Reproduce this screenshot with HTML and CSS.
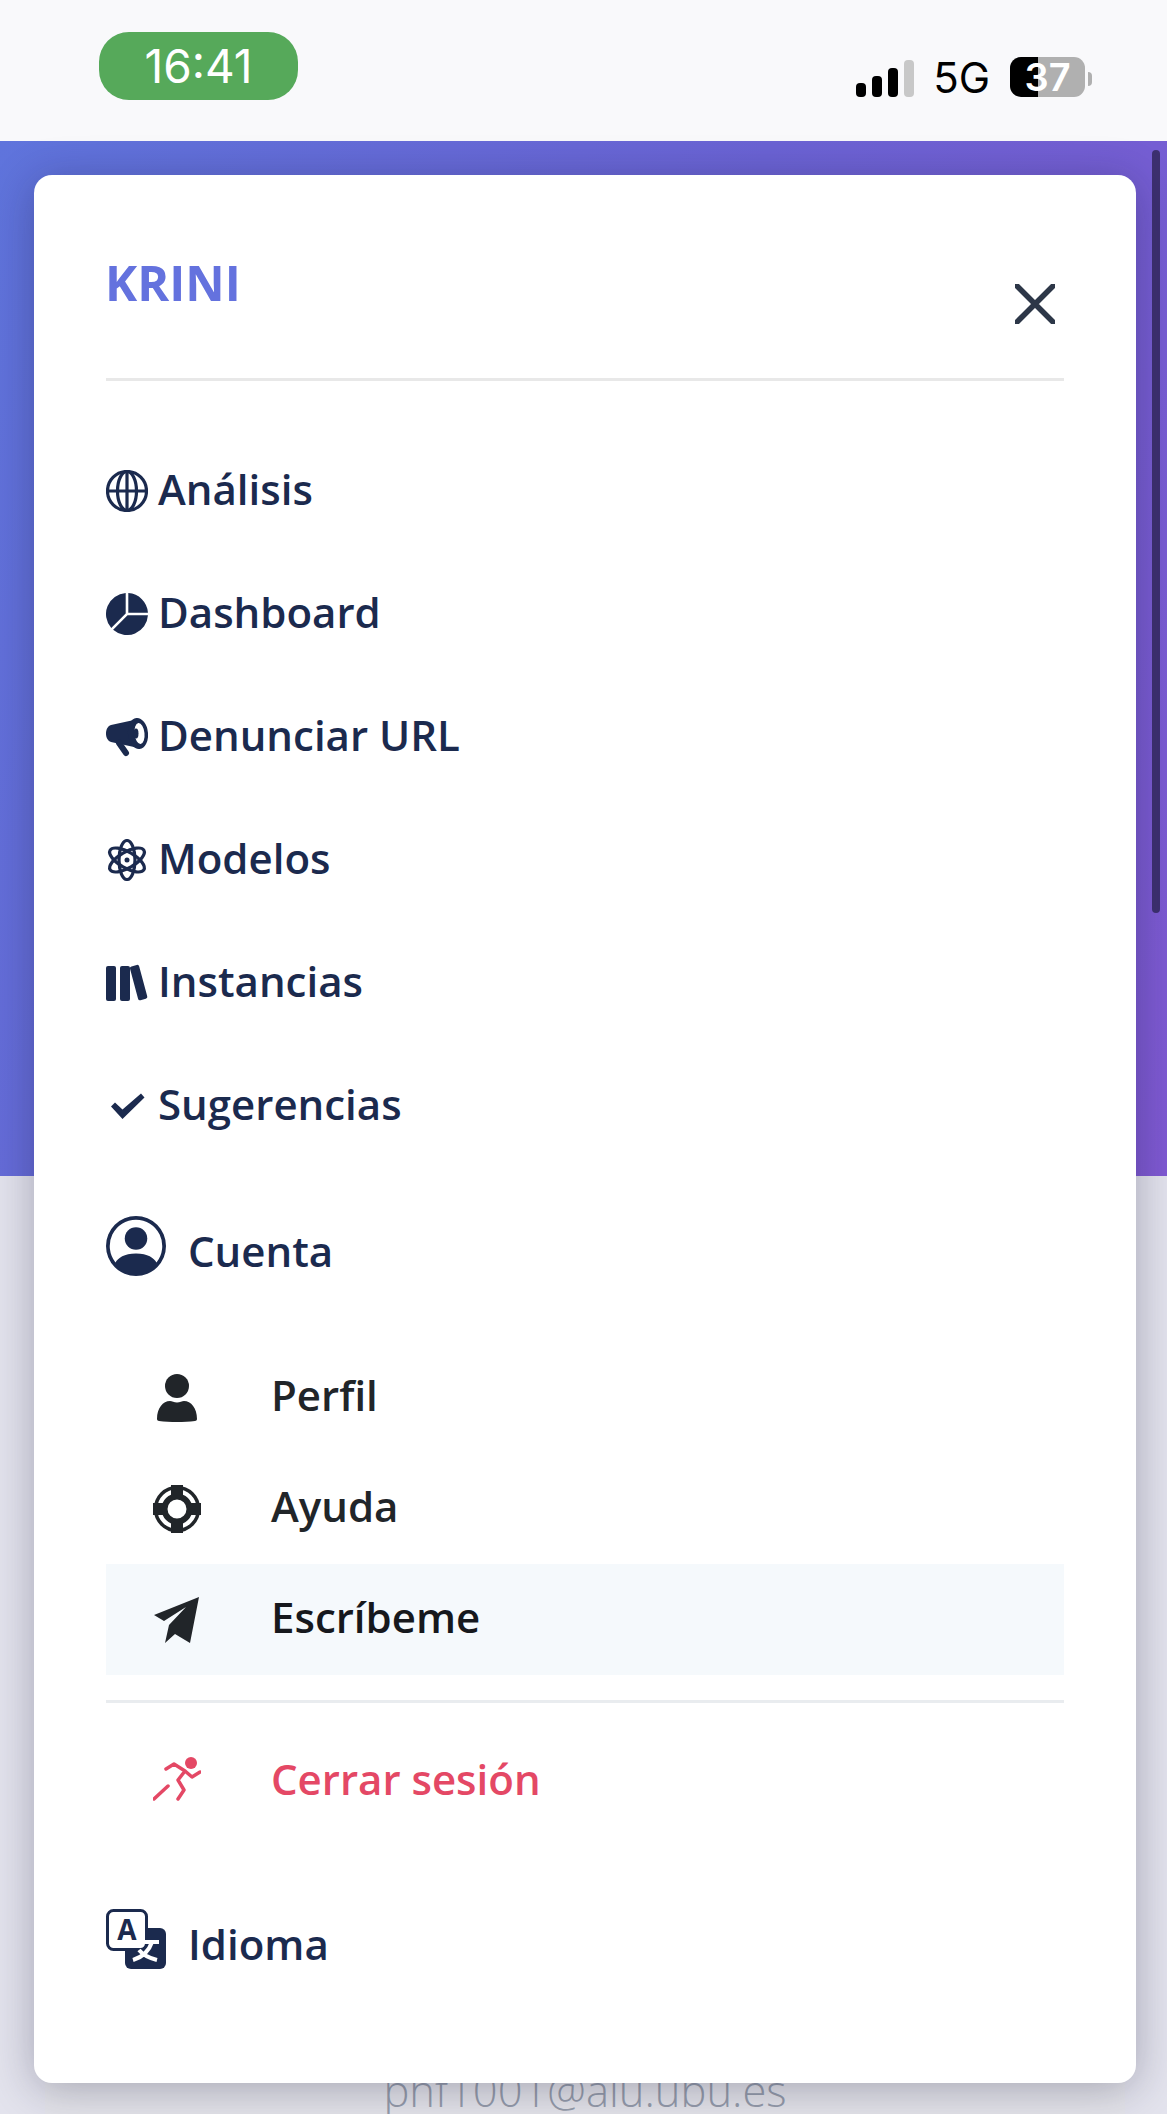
FILE: index.html
```html
<!DOCTYPE html>
<html lang="es">
<head>
    <meta charset="UTF-8">
    <meta name="viewport" content="width=device-width, initial-scale=1.0">
    <title>KRINI</title>
    <link rel="stylesheet" href="styles.css">
</head>
<body>
    <div class="status-bar">
        <div class="clock">16:41</div>
        <div class="status-right">
            <div class="signal">
                <span class="bar bar-1"></span>
                <span class="bar bar-2"></span>
                <span class="bar bar-3"></span>
                <span class="bar bar-4"></span>
            </div>
            <span class="network">5G</span>
            <div class="battery"><span class="battery-text">37</span></div>
            <span class="battery-nub"></span>
        </div>
    </div>

    <div class="hero"></div>

    <div class="profile-panel">
        <div class="profile-mail">phf1001@alu.ubu.es</div>
    </div>

    <div class="scroll-thumb"></div>

    <div class="menu-card">
        <div class="menu-head">
            <div class="brand">KRINI</div>
            <svg class="close-icon" viewBox="0 0 40 40"><path d="M2 2 38 38M38 2 2 38"/></svg>
        </div>

        <div class="nav-list">
            <div class="nav-row">
                <svg class="icon icon-line" viewBox="0 0 42 42">
                    <circle cx="21" cy="21" r="19.500"/>
                    <ellipse cx="21" cy="21" rx="9.500" ry="19.500"/>
                    <path d="M21 1.500v39M1.500 21h39"/>
                </svg>
                <span class="nav-text">Análisis</span>
            </div>
            <div class="nav-row">
                <svg class="icon" viewBox="0 0 16 16"><path d="M15.985 8.500H8.207l-5.500 5.500a8 8 0 0 0 13.277-5.500zM2 13.292A8 8 0 0 1 7.500.015v7.778l-5.500 5.500zM8.500.015V7.500h7.485A8 8 0 0 0 8.500.015z"/></svg>
                <span class="nav-text">Dashboard</span>
            </div>
            <div class="nav-row">
                <svg class="icon" viewBox="0 0 42 42">
                    <path d="M5 9 28 4 28 31 5 26C2 25 0 22 0 17.500 0 13 2 10 5 9z"/>
                    <path class="icon-stem" d="M13 27 20 37"/>
                    <ellipse cx="32" cy="17.500" rx="10" ry="15.500" transform="rotate(-6 32 17.500)"/>
                    <ellipse cx="33.500" cy="17.500" rx="5" ry="10.500" fill="#fff" transform="rotate(-6 33.500 17.500)"/>
                    <ellipse cx="30" cy="17.500" rx="2.500" ry="5"/>
                </svg>
                <span class="nav-text">Denunciar URL</span>
            </div>
            <div class="nav-row">
                <svg class="icon icon-line" viewBox="0 0 42 42">
                    <ellipse cx="21" cy="21" rx="8" ry="19.500"/>
                    <ellipse cx="21" cy="21" rx="8" ry="19.500" transform="rotate(60 21 21)"/>
                    <ellipse cx="21" cy="21" rx="8" ry="19.500" transform="rotate(120 21 21)"/>
                    <circle class="icon-dot" cx="21" cy="21" r="2.500"/>
                </svg>
                <span class="nav-text">Modelos</span>
            </div>
            <div class="nav-row">
                <svg class="icon" viewBox="0 0 42 36"><rect x="0" y="1" width="10" height="35" rx="2"/><rect x="14" y="1" width="10" height="35" rx="2"/><rect x="28" y="0" width="9.500" height="35" rx="2" transform="rotate(-15 33 18)"/></svg>
                <span class="nav-text">Instancias</span>
            </div>
            <div class="nav-row">
                <svg class="icon" viewBox="0 0 42 42"><path d="M5 21.500 9 17.500 16.500 24.500 35 8.500 38.500 12.500 16.500 34z"/></svg>
                <span class="nav-text">Sugerencias</span>
            </div>
        </div>

        <div class="section-row account-row">
            <svg class="section-icon" viewBox="0 0 16 16"><path d="M11 6a3 3 0 1 1-6 0 3 3 0 0 1 6 0z"/><path fill-rule="evenodd" d="M0 8a8 8 0 1 1 16 0A8 8 0 0 1 0 8zm8-7a7 7 0 0 0-5.468 11.370C3.242 11.226 4.805 10 8 10s4.757 1.225 5.468 2.370A7 7 0 0 0 8 1z"/></svg>
            <span class="section-text">Cuenta</span>
        </div>

        <div class="sub-list">
            <div class="sub-row">
                <span class="sub-icon">
                    <svg viewBox="0 0 48 48"><circle cx="24" cy="12" r="12"/><path d="M6 47c-1 0-2-1-2-2 0-11 6-18 13-18 2 0 4 1.500 7 1.500s5-1.500 7-1.500c7 0 13 7 13 18 0 1-1 2-2 2-11 1.300-25 1.300-36 0z"/></svg>
                </span>
                <span class="sub-text">Perfil</span>
            </div>
            <div class="sub-row">
                <span class="sub-icon">
                    <svg viewBox="0 0 48 48">
                        <circle class="ring" cx="24" cy="24" r="21.500"/>
                        <circle class="ring ring-thick" cx="24" cy="24" r="12.500"/>
                        <path d="M18 0h12v14H18zM18 34h12v14H18zM0 18h14v12H0zM34 18h14v12H34z"/>
                    </svg>
                </span>
                <span class="sub-text">Ayuda</span>
            </div>
            <div class="sub-row sub-row-active">
                <span class="sub-icon">
                    <svg viewBox="0 0 48 48"><path d="M46 1 1 19 11 25 33 11 16 29 12 47 22 38 37 47z"/></svg>
                </span>
                <span class="sub-text">Escríbeme</span>
            </div>
        </div>

        <div class="sub-row logout-row">
            <span class="sub-icon">
                <svg class="runner" viewBox="0 0 48 44">
                    <circle class="runner-head" cx="38" cy="6" r="6"/>
                    <path d="M13 12 21 7 32 14 25 23 31 33 25 42M1 42 15 29M32 14 39 20 47 15"/>
                </svg>
            </span>
            <span class="logout-text">Cerrar sesión</span>
        </div>

        <div class="section-row language-row">
            <svg class="section-icon" viewBox="0 0 60 60">
                <rect x="19" y="19" width="41" height="41" rx="6"/>
                <rect class="letter-box" x="1.500" y="1.500" width="39" height="39" rx="6"/>
                <text class="icon-letter" x="21" y="31">A</text>
                <path class="icon-strokes" d="M33 33H53M46 33C43 42 37 48 27 51M33 41C37 46 43 49 51 51"/>
            </svg>
            <span class="section-text">Idioma</span>
        </div>
    </div>
</body>
</html>
```

FILE: styles.css
```css
* {
    box-sizing: border-box;
}

html, body {
    margin: 0;
    height: 2114px;
    overflow: hidden;
}

body {
    position: relative;
    background: #e3e3ed;
    font-family: "Open Sans", "Liberation Sans", sans-serif;
}

/* phone status bar */
.status-bar {
    height: 141px;
    background: #f9f9fb;
    display: flex;
    justify-content: space-between;
    padding: 32px 75px 0 99px;
}

.clock {
    width: 199px;
    height: 68px;
    border-radius: 30px;
    background: #56a95a;
    color: #fff;
    font-family: "Inter", "Liberation Sans", sans-serif;
    font-size: 46px;
    line-height: 68px;
    text-align: center;
}

.status-right {
    display: flex;
    align-items: flex-end;
    height: 65px;
    font-family: "Inter", "Liberation Sans", sans-serif;
}

.signal {
    display: flex;
    align-items: flex-end;
    gap: 6px;
    height: 37px;
    margin-right: 19px;
}

.bar {
    width: 10px;
    background: #000;
    border-radius: 4px;
}

.bar-1 { height: 14px; }
.bar-2 { height: 21px; }
.bar-3 { height: 29px; }
.bar-4 { height: 37px; background: #c8c8c8; }

.network {
    font-size: 42px;
    line-height: 38px;
    color: #000;
    margin-right: 20px;
}

.battery {
    width: 75px;
    height: 40px;
    border-radius: 11px;
    background: linear-gradient(90deg, #000 37%, #b0b0b0 37%);
    text-align: center;
}

.battery-text {
    color: #fff;
    font-size: 38px;
    font-weight: 600;
    line-height: 40px;
}

.battery-nub {
    width: 4px;
    height: 14px;
    margin: 0 0 11px 3px;
    background: #b0b0b0;
    border-radius: 0 7px 7px 0;
}

/* page behind the menu */
.hero {
    height: 1035px;
    background: linear-gradient(110deg, #5f74dc 0%, #6b63d4 50%, #7f59d2 100%);
}

.profile-panel {
    margin: 0 42px 0 45px;
    height: 938px;
    padding-top: 888px;
    background: #e4e4ea;
    text-align: center;
}

.profile-mail {
    font-size: 43.5px;
    font-weight: 300;
    line-height: 54px;
    color: #959cab;
}

.scroll-thumb {
    position: absolute;
    top: 150px;
    left: 1152px;
    width: 8px;
    height: 763px;
    border-radius: 4px;
    background: #3d3070;
}

/* menu overlay */
.menu-card {
    position: absolute;
    top: 175px;
    left: 34px;
    width: 1102px;
    height: 1908px;
    padding: 0 72px;
    background: #fff;
    border-radius: 18px;
    box-shadow: 0 6px 44px rgba(20, 20, 50, 0.3);
}

.menu-head {
    height: 206px;
    display: flex;
    justify-content: space-between;
    border-bottom: 3px solid #e8e8e8;
}

.brand {
    margin: 80px 0 0 -1px;
    font-size: 48.5px;
    font-weight: 700;
    line-height: 54px;
    color: #6472de;
}

.close-icon {
    width: 40px;
    height: 40px;
    margin: 109px 9px 0 0;
    fill: none;
    stroke: #2d3748;
    stroke-width: 5.5;
    stroke-linecap: round;
}

.nav-list {
    margin-top: 48px;
}

.nav-row, .section-row {
    display: flex;
    align-items: center;
    color: #1b2a4e;
    font-size: 42px;
    font-weight: 600;
}

.nav-row {
    height: 123px;
    gap: 10px;
}

.nav-text {
    margin-bottom: 5px;
}

.icon {
    width: 42px;
    height: 42px;
    fill: #1b2a4e;
    flex: none;
}

.icon-line {
    fill: none;
    stroke: #1b2a4e;
    stroke-width: 3.200;
}

.icon-dot {
    fill: #1b2a4e;
    stroke: none;
}

.icon-stem {
    stroke: #1b2a4e;
    stroke-width: 6;
    stroke-linecap: round;
}

.section-row {
    gap: 22px;
}

.section-icon {
    width: 60px;
    height: 60px;
    fill: #1b2a4e;
    flex: none;
}

.section-text {
    margin-top: 9px;
}

.account-row {
    height: 60px;
    margin-top: 49px;
}

.sub-list {
    margin-top: 66px;
    padding-bottom: 25px;
    border-bottom: 3px solid #e9ecef;
}

.sub-row {
    height: 111px;
    display: flex;
    align-items: center;
    color: #212529;
    font-size: 42px;
    font-weight: 600;
}

.sub-text {
    margin-bottom: 7px;
    margin-left: -2px;
}

.sub-row-active {
    background: #f5f9fc;
    color: #16181d;
}

.sub-row-active svg {
    fill: #16181d;
}

.sub-icon {
    width: 167px;
    padding-left: 47px;
    flex: none;
    display: flex;
}

.sub-icon svg {
    width: 48px;
    height: 48px;
    fill: #212529;
}

.ring {
    fill: none;
    stroke: #212529;
    stroke-width: 3.500;
}

.ring-thick {
    stroke-width: 6;
}

.logout-row {
    margin-top: 20px;
    color: #e44865;
}

.logout-text {
    margin-left: -2px;
}

.sub-icon .runner {
    fill: none;
    stroke: #e44865;
    stroke-width: 3.500;
    stroke-linecap: round;
    stroke-linejoin: round;
}

.runner-head {
    fill: #e44865;
    stroke: none;
}

.language-row {
    margin-top: 72px;
}

.letter-box {
    fill: #fff;
    stroke: #1b2a4e;
    stroke-width: 3;
}

.icon-letter {
    font-family: "Open Sans", sans-serif;
    font-size: 28px;
    font-weight: 700;
    fill: #1b2a4e;
    text-anchor: middle;
}

.icon-strokes {
    fill: none;
    stroke: #fff;
    stroke-width: 4;
}
```
